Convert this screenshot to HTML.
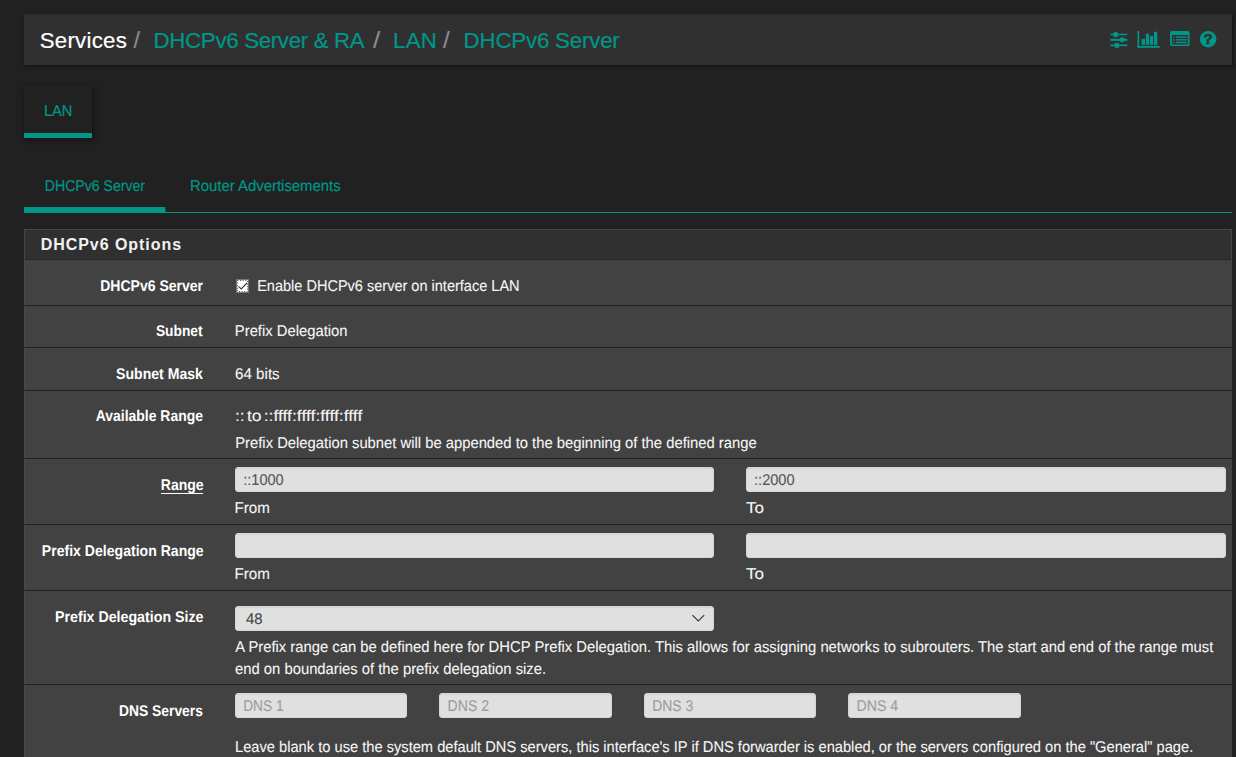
<!DOCTYPE html>
<html lang="en">
<head>
<meta charset="utf-8">
<title>Services: DHCPv6 Server</title>
<style>
*{box-sizing:border-box;margin:0;padding:0}
html,body{width:1236px;height:757px;overflow:hidden;background:#212121}
body{font-family:"Liberation Sans",sans-serif;font-size:14px;color:#e8e8e8;position:relative}
.a,.x{position:absolute;white-space:nowrap}
.x{line-height:20px;font-size:15.5px;transform-origin:0 50%}
.lbl,.val,.tab,.itx{text-rendering:geometricPrecision}
#hdr{left:24px;top:14px;width:1208px;height:51px;background:#303030;box-shadow:1px 1px 3px rgba(0,0,0,.5)}
.bc{font-size:22.3px;line-height:30px}
.sep{color:#8c8c8c}
.lk,.tab{color:#009688}
.tab{font-size:15.5px}
#lanbox{left:24px;top:86px;width:68px;height:52px;background:#212121;box-shadow:1px 2px 4px 0 rgba(0,0,0,.4),1px 2px 8px 0 rgba(0,0,0,.2);border-bottom:5px solid #009688}
#tabline{left:24px;top:212px;width:1208px;height:1px;background:#009688}
#tabon{left:24px;top:207px;width:142px;height:6px;border-bottom:6px solid #009688;border-right:1px solid transparent}
#panel{left:24px;top:229px;width:1208px;height:540px;background:#424242}
#phd{left:24px;top:229px;width:1208px;height:31px;background:#303030;border:1px solid #464646;border-bottom:0}
#phl{left:25px;top:259px;width:1206px;height:1px;background:#242424}
#pedge{left:24px;top:260px;width:1px;height:500px;background:#484848}
.ph{font-weight:bold;font-size:16px;letter-spacing:1px;color:#f2f2f2}
.sl{left:24px;width:1208px;height:1px;background:#212121}
.lbl{font-weight:bold;color:#fff;transform-origin:100% 50%}
.val{color:#f6f6f6}
.tab,.bc{-webkit-text-stroke:0.2px}
.val,.itx{-webkit-text-stroke:0.1px}
.inp{height:25px;background:#e0e0e0;border-radius:3px;border:1px solid #d6d6d6;box-shadow:inset 0 1px 1px rgba(0,0,0,.06)}
.itx{color:#555;font-size:15.5px}
#i7{color:#444}
.ph2{color:#9c9c9c}
</style>
</head>
<body>
<div id="hdr" class="a"></div>
<div id="lanbox" class="a"></div>
<div id="tabline" class="a"></div>
<div id="tabon" class="a"></div>
<div id="panel" class="a"></div>
<div id="phd" class="a"></div>
<div id="pedge" class="a"></div>
<div id="phl" class="a"></div>
<div class="a sl" style="top:305px"></div>
<div class="a sl" style="top:347px"></div>
<div class="a sl" style="top:390px"></div>
<div class="a sl" style="top:458px"></div>
<div class="a sl" style="top:524px"></div>
<div class="a sl" style="top:590px"></div>
<div class="a sl" style="top:684px"></div>
<div class="a inp" style="left:235px;top:467px;width:479px"></div>
<div class="a inp" style="left:746px;top:467px;width:480px"></div>
<div class="a inp" style="left:235px;top:533px;width:479px"></div>
<div class="a inp" style="left:746px;top:533px;width:480px"></div>
<div class="a inp" style="left:235px;top:606px;width:479px"></div>
<div class="a inp" style="left:235px;top:693px;width:172px"></div>
<div class="a inp" style="left:439px;top:693px;width:173px"></div>
<div class="a inp" style="left:644px;top:693px;width:172px"></div>
<div class="a inp" style="left:848px;top:693px;width:173px"></div>
<svg class="a" style="left:690px;top:612px" width="16" height="12" viewBox="0 0 16 12"><path d="M2.4 3.2 L8.3 9 L14.2 3.2" fill="none" stroke="#333" stroke-width="1.1"/></svg>
<svg class="a" style="left:236px;top:279px" width="13" height="14" viewBox="0 0 13 14"><rect x="0.5" y="0.5" width="12" height="13" fill="#fff" stroke="#767676"/><rect x="1.5" y="1.5" width="10" height="11" fill="none" stroke="#444" stroke-dasharray="1 1.6"/><path d="M2.5 7.4 L5.2 10 L11 4" fill="none" stroke="#3a3a3a" stroke-width="1.1"/></svg>
<div class="a" style="left:161px;top:493px;width:42px;height:1px;background:#fff"></div>
<svg class="a" style="left:1104px;top:24px" width="120" height="30" viewBox="1104 24 120 30" fill="#009688">
<rect x="1110.5" y="33.7" width="16.8" height="1.5"/><rect x="1110.5" y="38.8" width="16.8" height="2.1"/><rect x="1110.5" y="44.4" width="16.8" height="1.8"/>
<rect x="1113.2" y="32" width="4.9" height="5" rx="1.6"/><rect x="1120" y="37.6" width="4.5" height="4.5" rx="1"/><rect x="1114.6" y="42.9" width="4.5" height="4.9" rx="1"/>
<rect x="1137.5" y="31" width="1.7" height="16.8"/><rect x="1137.5" y="45.9" width="22.3" height="1.9"/>
<rect x="1141.6" y="38.8" width="3.4" height="6.1"/><rect x="1145.8" y="33.7" width="3.3" height="11.2"/><rect x="1149.9" y="35.9" width="3.2" height="9"/><rect x="1153.9" y="31.8" width="3.4" height="13.1"/>
<path fill-rule="evenodd" d="M1171.6 30.9h16.4a1.5 1.5 0 0 1 1.5 1.5v12.2a1.5 1.5 0 0 1 -1.5 1.5h-16.4a1.5 1.5 0 0 1 -1.5 -1.5v-12.2a1.5 1.5 0 0 1 1.5 -1.5z M1172 35.1v9.3h15.8v-9.3z"/>
<rect x="1173" y="36.4" width="1.4" height="1.4"/><rect x="1175.9" y="36.4" width="10.9" height="1.4"/>
<rect x="1173" y="39.1" width="1.4" height="1.4"/><rect x="1175.9" y="39.1" width="10.9" height="1.4"/>
<rect x="1173" y="41.8" width="1.4" height="1.4"/><rect x="1175.9" y="41.8" width="10.9" height="1.4"/>
<circle cx="1208.1" cy="39.2" r="8.3"/>
<text x="1208.2" y="44.3" text-anchor="middle" font-family="Liberation Sans, sans-serif" font-weight="bold" font-size="14.5" fill="#323232" stroke="#323232" stroke-width="0.7">?</text>
</svg>
<div id="bc1" class="x bc" style="left:39.63px;top:26px;letter-spacing:0.248px;color:#fff">Services</div>
<div id="s1" class="x bc sep" style="left:133px;top:25px;transform:translate(0.39px,0.9px) scale(1.0437,1.04);transform-origin:0 70%;">/</div>
<div id="bc2" class="x bc lk" style="left:153.57px;top:26px;letter-spacing:-0.333px;">DHCPv6 Server &amp; RA</div>
<div id="s2" class="x bc sep" style="left:373px;top:25px;transform:translate(0.07px,0.9px) scale(1.1601,1.04);transform-origin:0 70%;">/</div>
<div id="bc3" class="x bc lk" style="left:393.04px;top:26px;letter-spacing:0.272px;">LAN</div>
<div id="s3" class="x bc sep" style="left:443px;top:25px;transform:translate(0.08px,0.9px) scale(1.0809,1.04);transform-origin:0 70%;">/</div>
<div id="bc4" class="x bc lk" style="left:463.59px;top:26px;letter-spacing:-0.199px;">DHCPv6 Server</div>
<div id="lan" class="x tab" style="left:43px;top:102px;transform:translateX(0.92px) scaleX(0.9447);">LAN</div>
<div id="t1" class="x tab" style="left:44px;top:177px;transform:translateX(0.83px) scaleX(0.9090);">DHCPv6 Server</div>
<div id="t2" class="x tab" style="left:190px;top:177px;transform:translateX(0.03px) scaleX(0.9608);">Router Advertisements</div>
<div id="ph" class="x ph" style="left:40.72px;top:235px;letter-spacing:0.953px;">DHCPv6 Options</div>
<div id="l1" class="x lbl" style="left:89px;top:277px;transform:translateX(0.26px) scaleX(0.9036);">DHCPv6 Server</div>
<div id="v1" class="x val" style="left:257px;top:277px;transform:translateX(0.13px) scaleX(0.9373);">Enable DHCPv6 server on interface LAN</div>
<div id="l2" class="x lbl" style="left:150px;top:322px;transform:translateX(0.00px) scaleX(0.8870);">Subnet</div>
<div id="v2" class="x val" style="left:234px;top:322px;transform:translateX(0.83px) scaleX(0.9546);">Prefix Delegation</div>
<div id="l3" class="x lbl" style="left:107px;top:365px;transform:translateX(0.32px) scaleX(0.9082);">Subnet Mask</div>
<div id="v3" class="x val" style="left:235px;top:365px;transform:translateX(0.09px) scaleX(0.9759);">64 bits</div>
<div id="l4" class="x lbl" style="left:83px;top:407px;transform:translateX(0.79px) scaleX(0.8998);">Available Range</div>
<div id="v4" class="x val" style="left:234px;top:407px;transform:translateX(0.98px) scaleX(1.1321);word-spacing:-2.4px">:: to ::ffff:ffff:ffff:ffff</div>
<div id="h4" class="x val" style="left:235px;top:434px;transform:translateX(0.22px) scaleX(0.9544);">Prefix Delegation subnet will be appended to the beginning of the defined range</div>
<div id="l5" class="x lbl" style="left:156px;top:476px;transform:translateX(0.21px) scaleX(0.9040);">Range</div>
<div id="i5a" class="x itx" style="left:243px;top:471px;transform:translateX(0.22px) scaleX(0.9388);">::1000</div>
<div id="i5b" class="x itx" style="left:754px;top:471px;transform:translateX(0.04px) scaleX(0.9402);">::2000</div>
<div id="f5" class="x val" style="left:234px;top:499px;transform:translateX(0.52px) scaleX(0.9786);">From</div>
<div id="t5" class="x val" style="left:746px;top:499px;transform:translateX(0.03px) scaleX(1.0992);">To</div>
<div id="l6" class="x lbl" style="left:25px;top:542px;transform:translateX(0.37px) scaleX(0.9076);">Prefix Delegation Range</div>
<div id="f6" class="x val" style="left:234px;top:565px;transform:translateX(0.52px) scaleX(0.9786);">From</div>
<div id="t6" class="x val" style="left:746px;top:565px;transform:translateX(0.03px) scaleX(1.0992);">To</div>
<div id="l7" class="x lbl" style="left:41px;top:608px;transform:translateX(0.50px) scaleX(0.9167);">Prefix Delegation Size</div>
<div id="i7" class="x itx" style="left:245px;top:610px;transform:translateX(0.98px) scaleX(0.9607);">48</div>
<div id="h7a" class="x val" style="left:235px;top:638px;transform:translateX(0.22px) scaleX(0.9548);">A Prefix range can be defined here for DHCP Prefix Delegation. This allows for assigning networks to subrouters. The start and end of the range must</div>
<div id="h7b" class="x val" style="left:235px;top:660px;transform:translateX(0.06px) scaleX(0.9549);">end on boundaries of the prefix delegation size.</div>
<div id="l8" class="x lbl" style="left:109px;top:702px;transform:translateX(0.00px) scaleX(0.8939);">DNS Servers</div>
<div id="d1" class="x itx ph2" style="left:243px;top:697px;transform:translateX(0.14px) scaleX(0.8851);">DNS 1</div>
<div id="d2" class="x itx ph2" style="left:447px;top:697px;transform:translateX(0.60px) scaleX(0.9063);">DNS 2</div>
<div id="d3" class="x itx ph2" style="left:652px;top:697px;transform:translateX(0.20px) scaleX(0.9007);">DNS 3</div>
<div id="d4" class="x itx ph2" style="left:856px;top:697px;transform:translateX(0.48px) scaleX(0.9147);">DNS 4</div>
<div id="h8" class="x val" style="left:235px;top:738px;transform:translateX(0.04px) scaleX(0.9458);">Leave blank to use the system default DNS servers, this interface's IP if DNS forwarder is enabled, or the servers configured on the "General" page.</div>
</body>
</html>
